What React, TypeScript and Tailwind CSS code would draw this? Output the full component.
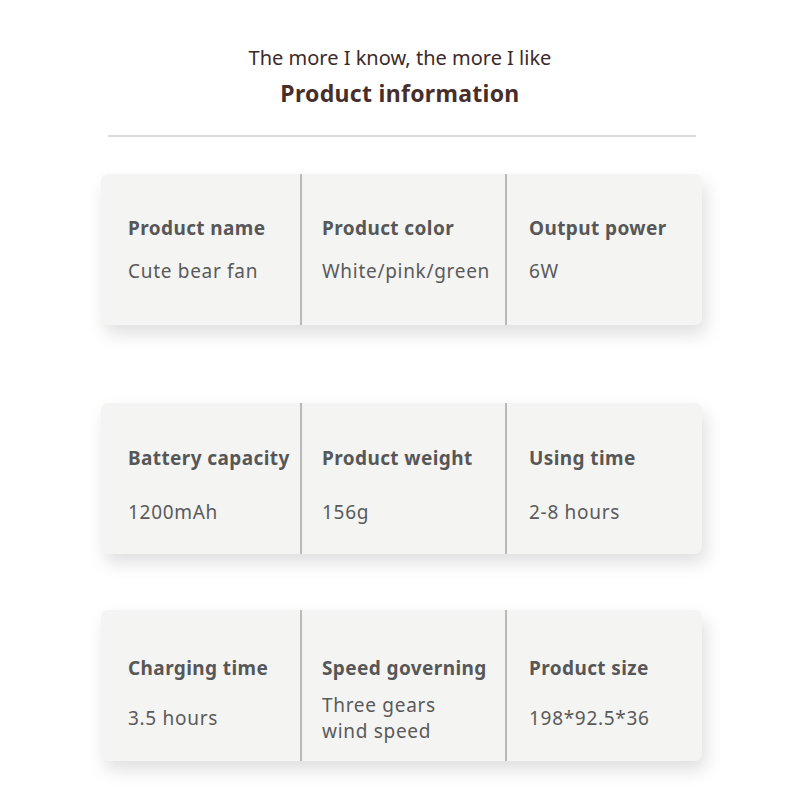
type Spec = { label: string; value: string[] };

type CardData = { pt: string; gap: string; vh: string; rows: Spec[] };

const cards: CardData[] = [
  {
    pt: "pt-[42px]",
    gap: "mt-[19px]",
    vh: "h-[24px]",
    rows: [
      { label: "Product name", value: ["Cute bear fan"] },
      { label: "Product color", value: ["White/pink/green"] },
      { label: "Output power", value: ["6W"] },
    ],
  },
  {
    pt: "pt-[43px]",
    gap: "mt-[30px]",
    vh: "h-[24px]",
    rows: [
      { label: "Battery capacity", value: ["1200mAh"] },
      { label: "Product weight", value: ["156g"] },
      { label: "Using time", value: ["2-8 hours"] },
    ],
  },
  {
    pt: "pt-[46px]",
    gap: "mt-[12px]",
    vh: "h-[52px]",
    rows: [
      { label: "Charging time", value: ["3.5 hours"] },
      { label: "Speed governing", value: ["Three gears", "wind speed"] },
      { label: "Product size", value: ["198*92.5*36"] },
    ],
  },
];

const cols = ["w-[199px] pl-[27px]", "w-[205px] pl-[20px]", "w-[197px] pl-[22px]"];
const tops = ["mt-[37px]", "mt-[78px]", "mt-[56px]"];

function Card({ card, top }: { card: CardData; top: string }) {
  return (
    <div
      className={`${top} ml-[101px] flex h-[151px] w-[601px] rounded-[7px] bg-[#f4f4f3] shadow-[4px_9px_18px_rgba(0,0,0,0.13)]`}
    >
      {card.rows.map((row, i) => (
        <div
          key={row.label}
          className={`${cols[i]} ${card.pt} h-full ${i > 0 ? "border-l-2 border-[#b9b9b9]" : ""}`}
        >
          <div className="whitespace-nowrap text-[19px] font-bold leading-[24px] tracking-[0.4px] text-[#575757]">
            {row.label}
          </div>
          <div
            className={`${card.gap} ${card.vh} flex flex-col justify-center whitespace-nowrap text-[19px] leading-[26px] tracking-[0.7px] text-[#5a5a5a]`}
          >
            {row.value.map((v) => (
              <div key={v}>{v}</div>
            ))}
          </div>
        </div>
      ))}
    </div>
  );
}

export default function App() {
  return (
    <div
      className="h-[800px] w-[800px] bg-white pt-[44px]"
      style={{ fontFamily: '"Noto Sans", "Open Sans", sans-serif' }}
    >
      <div className="text-center text-[20px] leading-[28px] text-[#3d2a28]">The more I know, the more I like</div>
      <div className="mt-[6px] text-center text-[23px] font-bold leading-[30px] tracking-[0.3px] text-[#472e2b]">
        Product information
      </div>
      <div className="ml-[108px] mt-[27px] h-[2px] w-[588px] bg-[#dadada]" />
      {cards.map((c, i) => (
        <Card key={i} card={c} top={tops[i]} />
      ))}
    </div>
  );
}
